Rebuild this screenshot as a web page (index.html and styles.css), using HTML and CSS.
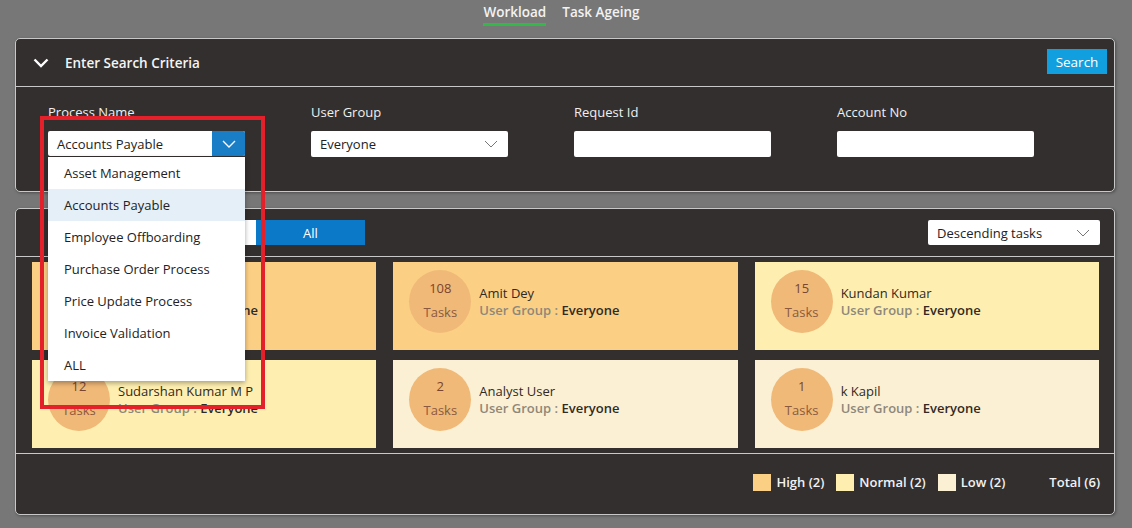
FILE: index.html
```html
<!DOCTYPE html>
<html>
<head>
<meta charset="utf-8">
<link rel="stylesheet" href="styles.css">
</head>
<body>
<div class="page">
  <nav class="tabs">
    <span class="tab active">Workload</span>
    <span class="tab">Task Ageing</span>
  </nav>

  <section class="panel search-panel">
    <header class="panel-head">
      <div class="head-title">
        <svg class="chev" width="16" height="10" viewBox="0 0 16 10"><polyline points="1.5,1.5 8,8 14.5,1.5" fill="none" stroke="#fff" stroke-width="2.4"/></svg>
        <span>Enter Search Criteria</span>
      </div>
      <button class="btn-search">Search</button>
    </header>
    <div class="form-row">
      <div class="field">
        <label>Process Name</label>
        <div class="select select-open">
          <span class="select-text">Accounts Payable</span>
          <span class="select-btn">
            <svg width="14" height="8" viewBox="0 0 14 8"><polyline points="1,1 7,7 13,1" fill="none" stroke="#fff" stroke-width="1.3"/></svg>
          </span>
        </div>
        <ul class="dropdown">
          <li>Asset Management</li>
          <li class="hover">Accounts Payable</li>
          <li>Employee Offboarding</li>
          <li>Purchase Order Process</li>
          <li>Price Update Process</li>
          <li>Invoice Validation</li>
          <li>ALL</li>
        </ul>
      </div>
      <div class="field">
        <label>User Group</label>
        <div class="select">
          <span class="select-text">Everyone</span>
          <svg class="thin-chev" width="14" height="8" viewBox="0 0 14 8"><polyline points="1,1 7,7 13,1" fill="none" stroke="#777" stroke-width="1"/></svg>
        </div>
      </div>
      <div class="field">
        <label>Request Id</label>
        <div class="input"></div>
      </div>
      <div class="field">
        <label>Account No</label>
        <div class="input"></div>
      </div>
    </div>
  </section>

  <section class="panel work-panel">
    <div class="toolbar">
      <div class="seg">
        <button class="seg-btn">Top 10</button>
        <button class="seg-btn on">All</button>
      </div>
      <div class="select sort">
        <span class="select-text">Descending tasks</span>
        <svg class="thin-chev" width="14" height="8" viewBox="0 0 14 8"><polyline points="1,1 7,7 13,1" fill="none" stroke="#777" stroke-width="1"/></svg>
      </div>
    </div>
    <div class="cards">
      <div class="card high">
        <div class="count"><span class="num">126</span><span class="lbl">Tasks</span></div>
        <div class="info"><div class="name">Admin User</div><div class="grp"><span class="grp-l">User Group :</span> <span class="grp-v">Everyone</span></div></div>
      </div>
      <div class="card high">
        <div class="count"><span class="num">108</span><span class="lbl">Tasks</span></div>
        <div class="info"><div class="name">Amit Dey</div><div class="grp"><span class="grp-l">User Group :</span> <span class="grp-v">Everyone</span></div></div>
      </div>
      <div class="card normal">
        <div class="count"><span class="num">15</span><span class="lbl">Tasks</span></div>
        <div class="info"><div class="name">Kundan Kumar</div><div class="grp"><span class="grp-l">User Group :</span> <span class="grp-v">Everyone</span></div></div>
      </div>
      <div class="card normal">
        <div class="count"><span class="num">12</span><span class="lbl">Tasks</span></div>
        <div class="info"><div class="name">Sudarshan Kumar M P</div><div class="grp"><span class="grp-l">User Group :</span> <span class="grp-v">Everyone</span></div></div>
      </div>
      <div class="card low">
        <div class="count"><span class="num">2</span><span class="lbl">Tasks</span></div>
        <div class="info"><div class="name">Analyst User</div><div class="grp"><span class="grp-l">User Group :</span> <span class="grp-v">Everyone</span></div></div>
      </div>
      <div class="card low">
        <div class="count"><span class="num">1</span><span class="lbl">Tasks</span></div>
        <div class="info"><div class="name">k Kapil</div><div class="grp"><span class="grp-l">User Group :</span> <span class="grp-v">Everyone</span></div></div>
      </div>
    </div>
    <footer class="legend">
      <span class="lg"><i class="sw high"></i>High (2)</span>
      <span class="lg"><i class="sw normal"></i>Normal (2)</span>
      <span class="lg"><i class="sw low"></i>Low (2)</span>
      <span class="lg total">Total (6)</span>
    </footer>
  </section>

  <div class="highlight-box"></div>
</div>
</body>
</html>
```

FILE: styles.css
```css
* { box-sizing: border-box; }
html, body { margin: 0; padding: 0; }
body {
  background: #777777;
  font-family: "Open Sans", "Noto Sans", sans-serif;
  font-size: 13px;
  color: #333;
  width: 1132px;
  height: 528px;
  overflow: hidden;
}
.page { position: relative; padding-top: 0; }

.tabs {
  display: flex;
  justify-content: center;
  gap: 16px;
  height: 38px;
  padding-right: 9px;
  margin-top: 0;
}
.tab {
  font-weight: 600;
  font-size: 13.5px;
  color: #f2f2f2;
  height: 26px;
  line-height: 24px;
  border-bottom: 3px solid transparent;
}
.tab.active { border-bottom-color: #34b84a; }

.panel {
  width: 1100px;
  margin-left: 15px;
  background: #332f2f;
  border: 1px solid #c8c8c8;
  border-radius: 5px;
  box-shadow: 1px 1px 3px rgba(0,0,0,0.35);
}

.panel-head {
  height: 48px;
  border-bottom: 1px solid #c8c8c8;
  display: flex;
  align-items: center;
  justify-content: space-between;
  padding: 0 7px 0 17px;
}
.head-title { display: flex; align-items: center; gap: 16px; color: #f4f4f4; font-weight: 600; font-size: 13.5px; }
.chev { display: block; }
.btn-search {
  font-family: inherit;
  font-size: 13.5px;
  color: #fff;
  background: #129fe0;
  border: none;
  height: 25px;
  width: 60px;
  padding: 0;
  margin-bottom: 2px;
}

.form-row {
  display: flex;
  gap: 66px;
  padding: 16px 0 0 32px;
  height: 104px;
}
.field { position: relative; width: 197px; }
.field label { display: block; color: #f0f0f0; font-size: 13px; line-height: 18px; margin-bottom: 10px; }
.select, .input {
  height: 26px;
  background: #fff;
  border-radius: 2px;
  display: flex;
  align-items: center;
  justify-content: space-between;
}
.select-text { padding-left: 9px; color: #222; font-size: 13px; line-height: 26px; }
.select-open { overflow: hidden; height: 25px; }
.select-btn {
  width: 33px;
  height: 25px;
  background: #1a7ec7;
  display: flex;
  align-items: center;
  justify-content: center;
}
.thin-chev { margin-right: 10px; }

.dropdown {
  position: absolute;
  left: 0;
  top: 54px;
  width: 197px;
  margin: 0;
  padding: 0;
  list-style: none;
  background: #fff;
  box-shadow: 0 2px 5px rgba(0,0,0,0.35);
  z-index: 5;
}
.dropdown li {
  height: 32px;
  line-height: 33px;
  padding-left: 16px;
  color: #222;
  font-size: 13px;
}
.dropdown li.hover { background: #e4eff8; }

.work-panel { margin-top: 16px; }
.toolbar {
  height: 48px;
  border-bottom: 1px solid #c8c8c8;
  display: flex;
  align-items: center;
  justify-content: space-between;
  padding: 0 14px 0 131px;
}
.seg { display: flex; }
.seg-btn {
  font-family: inherit;
  font-size: 13px;
  width: 109px;
  height: 25px;
  border: none;
  background: #fff;
  color: #333;
  padding: 0;
}
.seg-btn.on { background: #0b79c8; color: #fff; }
.sort { width: 172px; height: 25px; }
.sort .select-text { padding-left: 9px; }

.cards {
  display: grid;
  grid-template-columns: repeat(3, 1fr);
  column-gap: 17px;
  row-gap: 10px;
  padding: 5px 15px 5px 16px;
  border-bottom: 1px solid #c8c8c8;
}
.card {
  height: 88px;
  display: flex;
  align-items: flex-start;
  padding: 8px 16px;
}
.card.high { background: #fcd084; }
.card.normal { background: #feefb0; }
.card.low { background: #fcf0d4; }
.count {
  width: 62px;
  height: 63px;
  border-radius: 50%;
  background: #f0b978;
  display: flex;
  flex-direction: column;
  align-items: center;
  justify-content: flex-start;
  padding-top: 6px;
  flex-shrink: 0;
}
.num { color: #7a4530; font-size: 13px; line-height: 24px; }
.lbl { color: #8a5a40; font-size: 13px; line-height: 24px; }
.info { margin-left: 8px; margin-top: 15px; }
.name { color: #2f2a24; font-size: 13px; line-height: 17px; }
.grp { line-height: 17px; font-size: 13px; }
.grp-l { color: #8d887a; font-weight: 600; }
.grp-v { color: #2f2a24; font-weight: 600; }

.legend {
  height: 60px;
  display: flex;
  align-items: center;
  justify-content: flex-end;
  padding: 0 14px 4px 0;
  color: #f2f2f2;
  font-weight: 600;
  font-size: 13px;
}
.lg { display: flex; align-items: center; margin-left: 12px; }
.sw { display: inline-block; width: 18px; height: 17px; margin-right: 5px; }
.sw.high { background: #fcd084; }
.sw.normal { background: #feefb0; }
.sw.low { background: #fcf0d4; }
.lg.total { margin-left: 44px; }

.highlight-box {
  position: absolute;
  left: 40px;
  top: 116px;
  width: 225px;
  height: 293px;
  border: 4px solid #e4212b;
  z-index: 10;
  pointer-events: none;
}
```
